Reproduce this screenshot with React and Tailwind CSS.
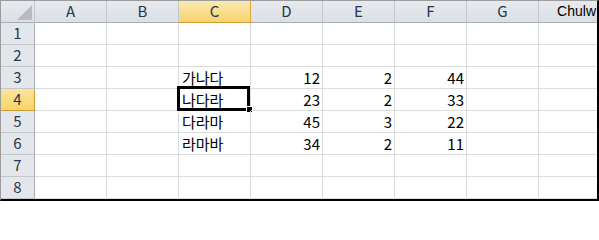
import React from 'react';

const cols = ['A', 'B', 'C', 'D', 'E', 'F', 'G'];

const rows = [
  {},
  {},
  { C: '가나다', D: 12, E: 2, F: 44 },
  { C: '나다라', D: 23, E: 2, F: 33 },
  { C: '다라마', D: 45, E: 3, F: 22 },
  { C: '라마바', D: 34, E: 2, F: 11 },
  {},
  {},
];

const font = { fontFamily: '"Noto Sans CJK KR", "Noto Sans", sans-serif' };

const HeaderCell = ({ children, active }) => (
  <div
    className={
      active
        ? 'flex items-center justify-center border-r border-b border-r-[#e0a53e] border-b-[#d39b36] bg-gradient-to-b from-[#fbe9b0] to-[#f7d36c] text-[15px] text-[#26364a]'
        : 'flex items-center justify-center border-r border-b border-r-[#c3c7cc] border-b-[#a9aeb4] bg-gradient-to-b from-[#e6e9ed] to-[#dcdfe4] text-[15px] text-[#26364a]'
    }
  >
    {children}
  </div>
);

const RowHead = ({ n, active }) => (
  <div
    className={
      active
        ? 'flex items-center justify-center border-r border-b border-[#d39b36] bg-gradient-to-b from-[#fbe49a] to-[#f8d567] text-[15px] text-[#26364a]'
        : 'flex items-center justify-center border-r border-b border-r-[#a9aeb4] border-b-[#c3c7cc] bg-[#e3e6ea] text-[15px] text-[#26364a]'
    }
  >
    {n}
  </div>
);

export default function App() {
  return (
    <div
      className="w-[599px] h-[201px] overflow-hidden bg-white border-l border-t border-l-[#9c9c9c] border-t-[#9c9c9c] border-r-2 border-b-2 border-r-black border-b-black"
      style={font}
    >
      <div className="grid grid-cols-[34px_repeat(7,72px)_1fr] grid-rows-[repeat(9,22px)]">
        {/* corner */}
        <div className="relative border-r border-b border-r-[#c3c7cc] border-b-[#a9aeb4] bg-gradient-to-b from-[#e6e9ed] to-[#dcdfe4]">
          <svg className="absolute left-[16px] top-[4px]" width="15" height="15" viewBox="0 0 15 15">
            <polygon points="15,0 15,15 0,15" fill="#b8bcc2" />
          </svg>
        </div>

        {cols.map((c) => (
          <HeaderCell key={c} active={c === 'C'}>
            {c}
          </HeaderCell>
        ))}
        <div className="flex justify-end overflow-hidden whitespace-nowrap border-b border-b-[#a9aeb4] bg-gradient-to-b from-[#e6e9ed] to-[#dcdfe4] pr-[1px] pt-[1px] text-[14px] leading-[18px] text-black" style={{ fontFamily: '"Liberation Sans", Arial, sans-serif' }}>
          Chulw
        </div>

        {rows.map((r, i) => (
          <React.Fragment key={i}>
            <RowHead n={i + 1} active={i === 3} />
            {cols.map((c) => {
              const v = r[c];
              const isText = typeof v === 'string';
              return (
                <div
                  key={c}
                  className={
                    'relative flex items-center border-r border-b border-[#dadcdd] text-[15px] leading-none text-black ' +
                    (isText ? 'justify-start pl-[3px]' : 'justify-end pr-[2px]')
                  }
                >
                  {v}
                  {i === 3 && c === 'C' && (
                    <>
                      <div className="absolute -left-[2px] -top-[3px] w-[73px] h-[25px] border-[3px] border-black" />
                      <div className="absolute left-[67px] top-[17px] w-[7px] h-[7px] bg-black border border-white" />
                    </>
                  )}
                </div>
              );
            })}
            <div className="border-b border-[#dadcdd]" />
          </React.Fragment>
        ))}
      </div>
    </div>
  );
}
